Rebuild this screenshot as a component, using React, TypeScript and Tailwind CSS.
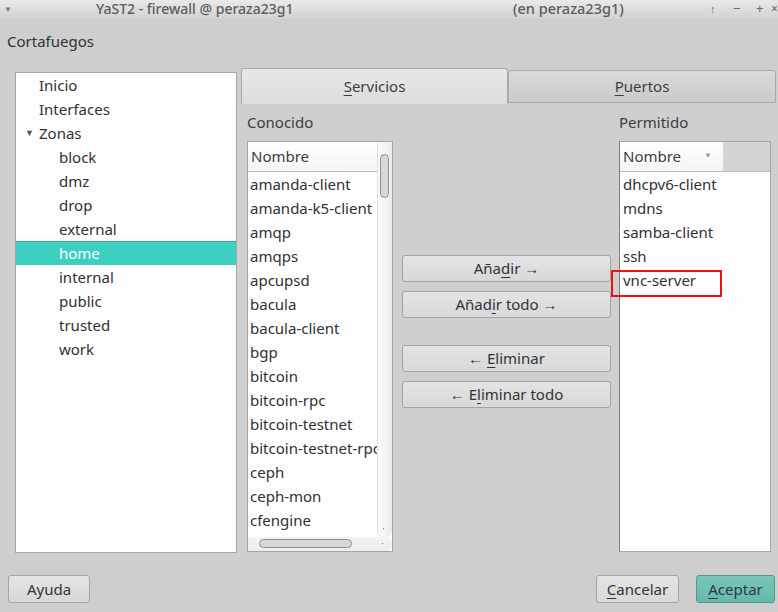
import React from "react";

const font = { fontFamily: '"Noto Sans", "Open Sans", sans-serif' };

function U({ children }: { children: React.ReactNode }) {
  return <span className="underline underline-offset-[3px] decoration-1">{children}</span>;
}

const known = [
  "amanda-client",
  "amanda-k5-client",
  "amqp",
  "amqps",
  "apcupsd",
  "bacula",
  "bacula-client",
  "bgp",
  "bitcoin",
  "bitcoin-rpc",
  "bitcoin-testnet",
  "bitcoin-testnet-rpc",
  "ceph",
  "ceph-mon",
  "cfengine",
];

const allowed = ["dhcpv6-client", "mdns", "samba-client", "ssh", "vnc-server"];

const zones = ["block", "dmz", "drop", "external", "home", "internal", "public", "trusted", "work"];

function Btn({ children, className = "" }: { children: React.ReactNode; className?: string }) {
  return (
    <div
      className={
        "flex items-center justify-center rounded-[3px] border border-[#a4a4a4] bg-gradient-to-b from-[#e4e4e4] to-[#d8d8d8] text-[15px] text-[#30343a] " +
        className
      }
    >
      {children}
    </div>
  );
}

export default function App() {
  return (
    <div className="w-[778px] h-[612px] bg-[#cecece] flex flex-col overflow-hidden text-[#2f3236]" style={font}>
      {/* Title bar */}
      <div className="h-[19px] bg-gradient-to-b from-[#e9e9e9] to-[#d2d2d2] text-[#5c5c5c] text-[14px] relative">
        <span className="absolute left-[4px] top-[3px] text-[8px] text-[#777]">▼</span>
        <span className="absolute left-[96px] top-0 font-medium leading-[17px] text-[14px]">YaST2 - firewall @ peraza23g1</span>
        <span className="absolute left-[513px] top-0 font-medium leading-[17px] text-[14.5px]">(en peraza23g1)</span>
        <span className="absolute left-[710px] top-0 leading-[17px] text-[11px] text-[#666]">↑</span>
        <span className="absolute left-[733px] top-0 leading-[17px] text-[13px] text-[#666]">−</span>
        <span className="absolute left-[756px] top-0 leading-[17px] text-[13px] text-[#666]">+</span>
        <span className="absolute left-[771px] top-0 leading-[17px] text-[12px] text-[#666]">×</span>
      </div>

      {/* Heading */}
      <div className="h-[49px] pl-[7px] pt-[13px] text-[15px] leading-[19px] text-[#2f3236]">Cortafuegos</div>

      {/* Main */}
      <div className="flex h-[492px]">
        {/* Tree */}
        <div className="ml-[15px] mt-[4px] w-[222px] h-[481px] bg-[#fdfdfd] border border-[#a6a6a6] text-[15px]">
          <div className="h-[24px] flex items-center pl-[23px]">Inicio</div>
          <div className="h-[24px] flex items-center pl-[23px]">Interfaces</div>
          <div className="h-[24px] flex items-center pl-[9px]">
            <span className="text-[9px] text-[#555] w-[14px]">▼</span>
            Zonas
          </div>
          {zones.map((z) =>
            z === "home" ? (
              <div
                key={z}
                className="h-[24px] flex items-center pl-[43px] bg-[#3dd0c0] border-t border-[#31a99b] text-white"
              >
                {z}
              </div>
            ) : (
              <div key={z} className="h-[24px] flex items-center pl-[43px]">
                {z}
              </div>
            )
          )}
        </div>

        {/* Tab widget */}
        <div className="w-[541px] flex flex-col">
          <div className="flex items-end h-[36px] pl-[4px]">
            <div className="w-[267px] h-[36px] rounded-t-[3px] border border-b-0 border-[#a9a9a9] bg-gradient-to-b from-[#e8e8e8] to-[#dcdcdc] flex items-center justify-center text-[15px] text-[#3a3d42]">
              <span>
                <U>S</U>ervicios
              </span>
            </div>
            <div className="w-[268px] h-[33px] mb-[1px] rounded-t-[3px] border border-[#a9a9a9] bg-gradient-to-b from-[#d9d9d9] to-[#cbcbcb] flex items-center justify-center text-[15px] text-[#3a3d42]">
              <span>
                <U>P</U>uertos
              </span>
            </div>
          </div>
          <div className="flex-1 bg-[#cfcfcf] flex pl-[10px]">
            {/* Known */}
            <div className="flex flex-col w-[146px]">
              <div className="h-[37px] pt-[9px] text-[15px] leading-[19px] text-[#3a3d42]">Conocido</div>
              <div className="relative h-[411px] bg-[#fdfdfd] border border-[#a6a6a6] overflow-hidden">
                <div className="flex h-[395px]">
                  <div className="w-[130px] overflow-hidden">
                    <div className="h-[30px] border-b border-[#bdbdbd] bg-gradient-to-b from-[#ffffff] to-[#f4f4f4] flex items-center pl-[3px] text-[15px] text-[#3a3d42]">
                      Nombre
                    </div>
                    {known.map((k) => (
                      <div key={k} className="h-[24px] flex items-center pl-[2px] text-[15px] whitespace-nowrap">
                        {k}
                      </div>
                    ))}
                  </div>
                  <div className="w-[15px] h-[395px] rounded-b-[6px] bg-gradient-to-r from-[#fbfbfb] to-[#ececec] border-l border-[#e0e0e0] relative">
                    <div className="absolute left-[2px] top-[12px] w-[9px] h-[44px] rounded-full border border-[#8e8e8e] bg-[#d8d8d8]" />
                    <div className="absolute left-[5px] bottom-[8px] w-[1px] h-[1px] bg-[#777]" />
                  </div>
                </div>
                <div className="h-[14px] relative bg-gradient-to-b from-[#f4f4f4] to-[#ececec] rounded-r-[6px]">
                  <div className="absolute left-[11px] top-[2px] w-[93px] h-[9px] rounded-full border border-[#8e8e8e] bg-[#d8d8d8]" />
                  <div className="absolute left-[134px] top-[6px] w-[1px] h-[1px] bg-[#777]" />
                </div>
              </div>
            </div>

            {/* Buttons */}
            <div className="w-[209px] ml-[9px] flex flex-col pt-[151px]">
              <Btn className="h-[27px]">
                <span>
                  Aña<U>d</U>ir →
                </span>
              </Btn>
              <Btn className="h-[27px] mt-[9px]">
                <span>
                  Añad<U>i</U>r todo →
                </span>
              </Btn>
              <Btn className="h-[27px] mt-[27px]">
                <span>
                  ← <U>E</U>liminar
                </span>
              </Btn>
              <Btn className="h-[27px] mt-[9px]">
                <span>
                  ← E<U>l</U>iminar todo
                </span>
              </Btn>
            </div>

            {/* Allowed */}
            <div className="flex flex-col w-[152px] ml-[8px]">
              <div className="h-[37px] pt-[9px] text-[15px] leading-[19px] text-[#3a3d42]">Permitido</div>
              <div className="relative h-[411px] bg-[#fdfdfd] border border-[#a6a6a6] border-l-[#7e7e7e]">
                <div className="h-[30px] flex border-b border-[#bdbdbd]">
                  <div className="w-[103px] bg-gradient-to-b from-[#ffffff] to-[#f4f4f4] flex items-center pl-[3px] text-[15px] text-[#3a3d42] relative">
                    Nombre
                    <span className="absolute left-[84px] top-[7px] text-[8px] text-[#999]">▼</span>
                  </div>
                  <div className="flex-1 bg-[#d4d4d4]" />
                </div>
                {allowed.map((k) => (
                  <div key={k} className="h-[24px] flex items-center pl-[3px] text-[15px] whitespace-nowrap">
                    {k}
                  </div>
                ))}
                <div className="absolute left-[-9px] top-[128px] w-[111px] h-[27px] border-2 border-[#ee1111]" />
              </div>
            </div>
          </div>
        </div>
      </div>

      {/* Bottom buttons */}
      <div className="flex items-start pt-[15px] pl-[8px] pr-[3px]">
        <Btn className="w-[82px] h-[28px]">Ayuda</Btn>
        <div className="flex-1" />
        <Btn className="w-[83px] h-[28px]">
          <span>
            <U>C</U>ancelar
          </span>
        </Btn>
        <div className="ml-[17px] w-[79px] h-[28px] flex items-center justify-center rounded-[3px] border border-[#4f9a8f] bg-gradient-to-b from-[#79c5b9] to-[#67b9ac] text-[15px] text-[#2a3a38]">
          <span>
            <U>A</U>ceptar
          </span>
        </div>
      </div>
    </div>
  );
}
